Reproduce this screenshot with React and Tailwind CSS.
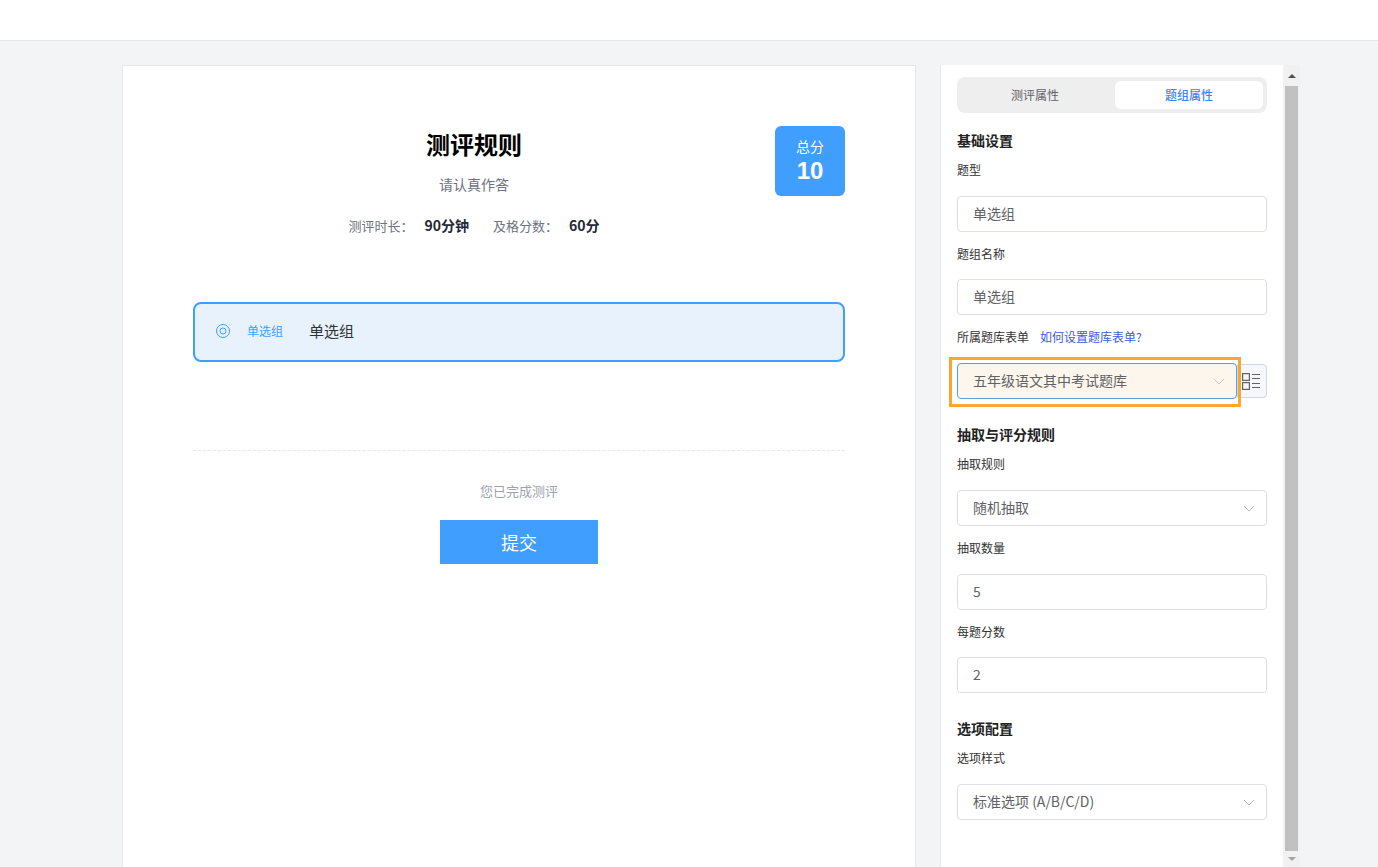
import React from 'react';

const ChevronDown = ({ className }) => (
  <svg width="12" height="7" viewBox="0 0 12 7" fill="none" stroke="currentColor" strokeWidth="1" className={className}>
    <path d="M1 1l5 5 5-5" />
  </svg>
);

const FieldLabel = ({ children, className = '' }) => (
  <div className={`text-xs leading-5 text-[#333] ${className}`}>{children}</div>
);

const SectionTitle = ({ children, className = '' }) => (
  <div className={`text-sm leading-[18px] pb-0.5 font-bold text-[#222] ${className}`}>{children}</div>
);

const Field = ({ value, select, className = '' }) => (
  <div className={`h-9 w-full flex items-center justify-between pl-[15px] pr-[11px] bg-white border border-[#dcdfe6] rounded-[4px] text-sm text-[#606266] ${className}`}>
    <span className="pb-[3px]">{value}</span>
    {select && <ChevronDown className="text-[#b4b8bf]" />}
  </div>
);

const App = () => {
  return (
    <div className="h-[867px] overflow-hidden bg-[#f3f4f6] font-['Noto_Sans_CJK_SC','Microsoft_YaHei',sans-serif]">
      <header className="h-[41px] bg-white border-b border-[#e5e7eb]" />

      <div className="flex pl-[122px] pt-6">
        {/* preview card */}
        <div className="w-[794px] h-[830px] bg-white border border-[#e5e7eb] px-[70px] pt-[60px]">
          <div className="flex gap-5 h-[176px]">
            <div className="flex-1">
              <h1 className="-mt-0.5 text-2xl leading-10 font-bold text-black text-center">测评规则</h1>
              <p className="mt-2.5 text-sm leading-5 text-[#6b7280] text-center">请认真作答</p>
              <div className="mt-[21px] flex justify-center gap-6 text-[13px] leading-5 text-[#6b7280]">
                <span>测评时长：<b className="ml-[11px] text-sm font-bold text-[#1f2937]">90分钟</b></span>
                <span>及格分数：<b className="ml-[11px] text-sm font-bold text-[#1f2937]">60分</b></span>
              </div>
            </div>
            <div className="w-[70px] h-[70px] pb-0.5 rounded-md bg-[#409eff] text-white flex flex-col items-center justify-center">
              <span className="text-sm leading-5">总分</span>
              <span className="mt-px text-2xl leading-7 font-bold font-['Liberation_Sans',sans-serif]">10</span>
            </div>
          </div>

          <div className="h-[60px] flex items-center border-2 border-[#409eff] rounded-lg bg-[#e8f2fc] pl-5 pb-0.5">
            <svg width="16" height="16" viewBox="0 0 16 16" fill="none" stroke="#409eff" strokeWidth="1">
              <circle cx="8" cy="8" r="6.5" />
              <circle cx="8" cy="8" r="3" />
            </svg>
            <span className="ml-4 text-xs text-[#409eff]">单选组</span>
            <span className="ml-[26px] text-[15px] text-[#303133]">单选组</span>
          </div>

          <div className="mt-[88px] border-t border-dashed border-[#e5e7eb]" />
          <p className="mt-[30px] text-[13px] leading-5 text-[#9ca3af] text-center">您已完成测评</p>
          <div className="mt-[19px] flex justify-center">
            <button className="w-[158px] h-11 bg-[#409eff] text-white text-lg">提交</button>
          </div>
        </div>

        {/* settings panel */}
        <div className="ml-6 w-[343px] h-[802px] bg-white border-l border-[#e5e7eb] pl-4 pr-4 pt-3">
          <div className="h-9 p-1 flex gap-1.5 bg-[#eeeeee] rounded-lg text-xs">
            <div className="flex-1 flex items-center justify-center text-[#606266]">测评属性</div>
            <div className="flex-1 flex items-center justify-center bg-white rounded-md text-[#3f83f8] font-medium">题组属性</div>
          </div>

          <SectionTitle className="mt-[18px]">基础设置</SectionTitle>
          <FieldLabel className="mt-[9px]">题型</FieldLabel>
          <Field value="单选组" className="mt-4" />
          <FieldLabel className="mt-3">题组名称</FieldLabel>
          <Field value="单选组" className="mt-[15px]" />
          <div className="mt-3 flex items-center gap-[11px] text-xs leading-5">
            <span className="text-[#333]">所属题库表单</span>
            <span className="text-[#3b5bdb]">如何设置题库表单?</span>
          </div>

          <div className="mt-4 flex items-center">
            <div className="relative z-10 w-[280px]">
              <div className="h-9 flex items-center justify-between pl-[15px] pr-[11px] bg-[#fdf6ec] border border-[#5b9fe3] rounded-[4px] text-sm text-[#606266]">
                <span className="pb-[3px]">五年级语文其中考试题库</span>
                <ChevronDown className="text-[#c0c4cc]" />
              </div>
              <div className="absolute -left-2 -right-1 -top-[6px] -bottom-2 border-[3px] border-[#f9a82f] pointer-events-none" />
            </div>
            <div className="w-[30px] h-[34px] flex items-center justify-end pr-1.5 bg-[#f5f7fa] border border-[#d0d7e5] rounded-r-[4px]">
              <svg width="18" height="17" viewBox="0 0 18 17" fill="none" stroke="#606266" strokeWidth="1.2">
                <rect x="0.6" y="0.6" width="6.8" height="6.8" />
                <rect x="0.6" y="9.6" width="6.8" height="6.8" />
                <path d="M10 1.5h8M10 5.5h8M10 10.5h8M10 14.5h8" />
              </svg>
            </div>
          </div>

          <SectionTitle className="mt-[26px]">抽取与评分规则</SectionTitle>
          <FieldLabel className="mt-[9px]">抽取规则</FieldLabel>
          <Field value="随机抽取" select className="mt-4" />
          <FieldLabel className="mt-3">抽取数量</FieldLabel>
          <Field value="5" className="mt-4" />
          <FieldLabel className="mt-3">每题分数</FieldLabel>
          <Field value="2" className="mt-[15px]" />

          <SectionTitle className="mt-[26px]">选项配置</SectionTitle>
          <FieldLabel className="mt-[9px]">选项样式</FieldLabel>
          <Field value="标准选项 (A/B/C/D)" select className="mt-4" />
        </div>

        {/* scrollbar */}
        <div className="w-[17px] h-[802px] bg-[#f1f1f1] flex flex-col items-center">
          <div className="h-[21px] flex items-center justify-center">
            <div className="w-0 h-0 border-x-[4px] border-x-transparent border-b-[4px] border-b-[#505050]" />
          </div>
          <div className="w-[13px] h-[765px] bg-[#c1c1c1]" />
          <div className="flex-1 flex items-center justify-center">
            <div className="w-0 h-0 border-x-[4px] border-x-transparent border-t-[4px] border-t-[#a3a3a3]" />
          </div>
        </div>
      </div>
    </div>
  );
};

export default App;
